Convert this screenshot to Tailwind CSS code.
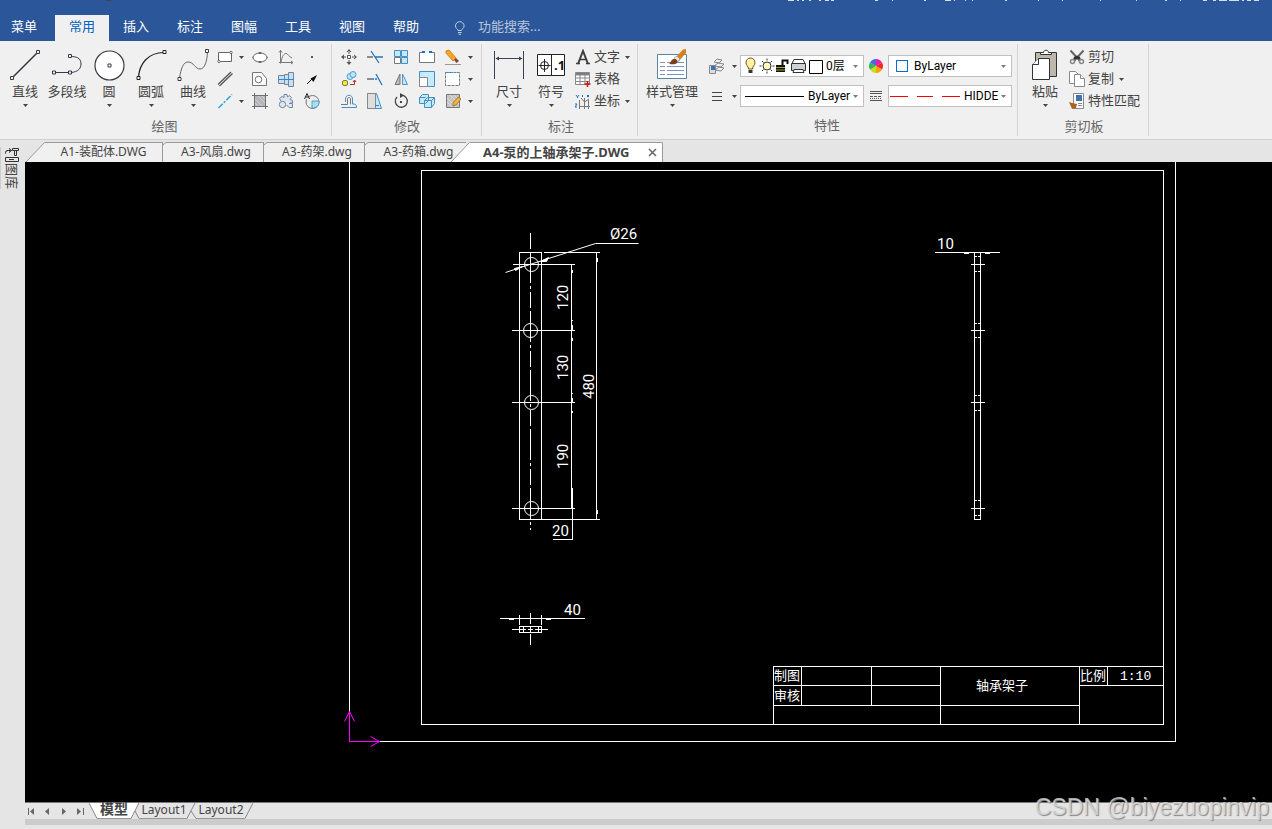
<!DOCTYPE html>
<html lang="zh-CN">
<head>
    <meta charset="UTF-8">
    <meta name="viewport" content="width=device-width, initial-scale=1.0">
    <title>A4-泵的上轴承架子.DWG</title>
    <script src="https://cdn.jsdelivr.net/npm/@tailwindcss/browser@4"></script>
</head>
<body class="min-h-screen flex flex-col bg-[#e5e5e5] text-[13px] text-[#444] font-['Noto_Sans','Noto_Sans_CJK_SC',sans-serif] overflow-hidden">
    <svg class="hidden">
        <symbol id="caret" viewBox="0 0 5 3"><path d="M0 0h5L2.5 3z" fill="#444"/></symbol>
    </svg>

    <!-- Title strip and menu -->
    <header class="bg-[#2b579a] h-[41px] flex flex-col">
        <svg class="w-full h-[2px] shrink-0" stroke="#d5deeb" stroke-width="2" shape-rendering="crispEdges">
            <path d="M788 0h6M797 0h2M802 0h2M809 0h2M819 0h2M825 0h4M831 0h3M875 0h3M892 0h1M924 0h2M945 0h6M954 0h1M965 0h1M972 0h1M1005 0h2M1038 0h1M1062 0h1M1100 0h1M1136 0h1M1165 0h2M1180 0h1M1203 0h4M1213 0h3M1219 0h8M1229 0h10M1242 0h2M1247 0h4M1254 0h5"/>
            <path d="M106 0h5" stroke="#444"/>
        </svg>
        <nav class="flex flex-1 items-end text-white leading-[22px]">
            <a href="#" class="w-12 h-[26px] text-center">菜单</a>
            <a href="#" class="ml-[7px] w-[54px] h-[26px] text-center bg-[#f0f0f0] text-[#0563c1]">常用</a>
            <a href="#" class="w-[54px] h-[26px] text-center">插入</a>
            <a href="#" class="w-[54px] h-[26px] text-center">标注</a>
            <a href="#" class="w-[54px] h-[26px] text-center">图幅</a>
            <a href="#" class="w-[54px] h-[26px] text-center">工具</a>
            <a href="#" class="w-[54px] h-[26px] text-center">视图</a>
            <a href="#" class="w-[54px] h-[26px] text-center">帮助</a>
            <label for="search" class="ml-[21px] w-6 h-[26px] pt-[6px]" aria-label="功能搜索">
                <svg class="w-3 h-[14px]" viewBox="0 0 12 14" fill="none" stroke="#c3cede"><path d="M4 9.5C4 8 1.5 7.500 1.500 5a4.300 4.300 0 0 1 8.600 0C10.100 7.500 7.500 8 7.500 9.500zM4 11.500h3.500M4.500 13.300h2.500"/></svg>
            </label>
            <input id="search" type="text" placeholder="功能搜索..." class="w-40 h-[26px] pb-1 bg-transparent outline-none placeholder:text-[#b9c5d8]">
        </nav>
    </header>

    <!-- Ribbon -->
    <div class="h-[99px] bg-[#f0f0f0] border-b border-[#d0d0d0] pt-[3px] pl-px flex">
        <!-- 绘图 -->
        <section class="pt-[2px] pl-[3px] pr-[6px] flex flex-col">
            <div class="flex h-[66px]">
                <button class="w-[42px] pt-[3px] flex flex-col items-center leading-5 whitespace-nowrap">
                    <svg class="size-8 shrink-0" viewBox="0 0 32 32" fill="#f0f0f0" stroke="#3a3a46"><path d="M3 29 29 3" stroke-width="1.600"/><path d="M1.500 27.500h3v3h-3zM27.500 1.500h3v3h-3z"/></svg>
                    直线<svg class="w-[5px] h-[3px] mt-[3px] shrink-0"><use href="#caret"/></svg>
                </button>
                <button class="w-[42px] pt-[3px] flex flex-col items-center leading-5 whitespace-nowrap">
                    <svg class="size-8 shrink-0" viewBox="0 0 32 32" fill="none" stroke="#3a3a46"><path d="M3 23.500h16c5 0 11-2 11-8.500S25 7.500 19 7.500"/><path d="M1.500 22h3v3h-3zM17.500 22h3v3h-3zM17.500 5.500h3v3h-3z" fill="#f0f0f0"/></svg>
                    多段线
                </button>
                <button class="w-[42px] pt-[3px] flex flex-col items-center leading-5 whitespace-nowrap">
                    <svg class="size-8 shrink-0" viewBox="0 0 32 32" fill="#fff" stroke="#3a3a46"><circle cx="16.500" cy="16.500" r="14.500" stroke-width="1.200"/><path d="M15 15h3v3h-3z"/></svg>
                    圆<svg class="w-[5px] h-[3px] mt-[3px] shrink-0"><use href="#caret"/></svg>
                </button>
                <button class="w-[42px] pt-[3px] flex flex-col items-center leading-5 whitespace-nowrap">
                    <svg class="size-8 shrink-0" viewBox="0 0 32 32" fill="none" stroke="#222"><path d="M3.500 29C4 15 13 3.500 29 3.500" stroke-width="1.200"/><path d="M2 27.500h3v3H2zM28 1.500h3v3h-3z" fill="#fff"/></svg>
                    圆弧<svg class="w-[5px] h-[3px] mt-[3px] shrink-0"><use href="#caret"/></svg>
                </button>
                <button class="w-[42px] pt-[3px] flex flex-col items-center leading-5 whitespace-nowrap">
                    <svg class="size-8 shrink-0" viewBox="0 0 32 32" fill="none" stroke="#3a3a46"><path d="M2.500 29C4 20 6 13 11 13c6 0 7 7 12 7 5 0 7-8 7.500-17" stroke="#666"/><path d="M1 28.500h3v3H1zM28.500.500h3v3h-3z" fill="#fff"/></svg>
                    曲线<svg class="w-[5px] h-[3px] mt-[3px] shrink-0"><use href="#caret"/></svg>
                </button>
                <div class="grid grid-cols-[22px_11px_26px_26px_26px] grid-rows-[22px_22px_22px] place-items-center">
                    <button aria-label="矩形"><svg class="size-4" viewBox="0 0 16 16" fill="#fff" stroke="#666"><path d="M1.500 3.500h13v9h-13z"/><circle cx="14" cy="3.500" r="1.200"/><circle cx="2" cy="12.500" r="1.200"/></svg></button>
                    <button aria-label="矩形选项"><svg class="w-[5px] h-[3px]"><use href="#caret"/></svg></button>
                    <button aria-label="椭圆"><svg class="size-4" viewBox="0 0 16 16" fill="#fff" stroke="#666"><ellipse cx="8" cy="8.500" rx="7" ry="4.500"/><path d="M7 3.500h2v1H7zM7 12.500h2v1H7zM1 8v1M15 8v1" fill="#444"/></svg></button>
                    <button aria-label="公式曲线"><svg class="size-4" viewBox="0 0 16 16" fill="none" stroke="#777"><path d="M2.500 1v13.500M1 13.500h14M1 3.500l1.500-2L4 3.500M13 12l2 1.500-2 1.500M3 13C4 7 6 4.500 8 4.500S11 8 14 9"/></svg></button>
                    <button aria-label="点"><svg class="size-4" viewBox="0 0 16 16"><path d="M7 7h2v2H7z" fill="#555"/></svg></button>

                    <button aria-label="平行线"><svg class="size-4" viewBox="0 0 16 16" stroke="#555" stroke-width="1.300"><path d="M1 13.500 14 1M2.500 15 15.500 2.500"/></svg></button>
                    <span></span>
                    <button aria-label="局部放大"><svg class="size-4" viewBox="0 0 16 16" fill="#fafafa" stroke="#777"><path d="M.500 1.500h9l5 6v7H.500z"/><circle cx="6.500" cy="8.500" r="3.300"/></svg></button>
                    <button aria-label="轴"><svg class="size-4" viewBox="0 0 16 16" fill="#c8dff3" stroke="#72879b"><path d="M.500 4.500h6v8h-6zM6.500 3.500h4v10h-4zM10.500 1.500h5v14h-5z"/><path d="M0 8.500h16" stroke="#2b8ad4"/></svg></button>
                    <button aria-label="箭头"><svg class="size-4" viewBox="0 0 16 16"><path d="m3 13 5-5" stroke="#111"/><path d="M13 4 6.500 7.500 9.500 11z" fill="#111"/></svg></button>

                    <button aria-label="中心线"><svg class="size-4" viewBox="0 0 16 16" stroke="#2ba3de" stroke-width="1.500"><path d="M1.500 15 15 1.500" stroke-dasharray="6 1.500 2 1.500"/></svg></button>
                    <button aria-label="中心线选项"><svg class="w-[5px] h-[3px]"><use href="#caret"/></svg></button>
                    <button aria-label="剖面线"><svg class="size-4" viewBox="0 0 16 16" fill="#b3b7bb" stroke="#6f6f6f"><path d="M2.500 2.500h11v11h-11z"/><path d="M2.500 0v16M13.500 0v16M0 2.500h16M0 13.500h16"/><path d="m3 6 7 7M3 10l3 3M6 3l7 7M10 3l3 3" stroke="#cfcfcf"/></svg></button>
                    <button aria-label="齿轮"><svg class="size-4" viewBox="0 0 16 16" fill="#dce5f1" stroke="#76869a"><path d="M3 8 1.500 5.500 4 3.500 6 4.500V1.500h3l.500 2.500 2-1.500 2 2-1.500 2 2.500 1v2.500H12M11 10.500h3.500v4H11L8.500 12"/><circle cx="4.500" cy="11.500" r="3.200"/></svg></button>
                    <button aria-label="文字查看"><svg class="size-4" viewBox="0 0 16 16"><circle cx="8.500" cy="9" r="6.500" fill="#eee" stroke="#777"/><path d="M8 8h7c.500 5-3 7-7 7z" fill="#a8dff5" stroke="#4f9ec2"/><path d="m.500 6 2.500-5.500L5.500 6M1.500 4h3" fill="#f0f0f0" stroke="#222"/></svg></button>
                </div>
            </div>
            <h2 class="text-center text-[#666] leading-[28px]">绘图</h2>
        </section>
        <div class="w-px h-[92px] bg-[#d4d4d4]"></div>

        <!-- 修改 -->
        <section class="pt-[2px] pl-1 pr-[7px] flex flex-col">
            <div class="grid grid-cols-[26px_26px_26px_26px_26px_8px] grid-rows-[22px_22px_22px] place-items-center">
                <button aria-label="平移"><svg class="size-4" viewBox="0 0 16 16" fill="#555"><path d="M6.500 6.500h3v3h-3z" fill="#fff" stroke="#555"/><path d="M8 0 5.500 3h5zM8 16l-2.500-3h5zM0 8l3-2.500v5zM16 8l-3-2.500v5zM7.500 2h1v3h-1zM7.500 11h1v3h-1zM2 7.500h3v1H2zM11 7.500h3v1h-3z"/></svg></button>
                <button aria-label="裁剪"><svg class="size-4" viewBox="0 0 16 16" stroke="#2474bf" stroke-width="1.300"><path d="M0 8h6" stroke="#555"/><path d="m4 2 8 12M8 8h8" /></svg></button>
                <button aria-label="阵列"><svg class="size-4" viewBox="0 0 16 16" fill="#c5e8fb" stroke="#4490c4"><path d="M1.500 1.500h6v6h-6zM8.500 1.500h6v6h-6zM8.500 8.500h6v6h-6z"/><path d="M1.500 8.500h6v6h-6z" fill="#fff" stroke="#777"/></svg></button>
                <button aria-label="打断"><svg class="size-4" viewBox="0 0 16 16" fill="#fff" stroke="#777"><path d="M5 3.500H.500v10h15v-10H11"/><path d="M3 3h3M10 3h3" stroke="#1670c5" stroke-width="2"/></svg></button>
                <button aria-label="删除"><svg class="size-4" viewBox="0 0 16 16"><path d="M1 2 4 1l7 8-3 3-7-8z" fill="#f2a62c" stroke="#d18a16"/><path d="m9 11 2-2 3 3-2.500 2z" fill="#8d4037"/><path d="M0 15.500h16" stroke="#999"/></svg></button>
                <button aria-label="删除选项"><svg class="w-[5px] h-[3px]"><use href="#caret"/></svg></button>

                <button aria-label="平移复制"><svg class="size-4" viewBox="0 0 16 16"><rect x="1.500" y="9.500" width="5" height="5" rx="1.500" fill="#ffef00" stroke="#777"/><circle cx="9" cy="5.500" r="3" fill="#bde5fa" stroke="#4c9ed1"/><circle cx="12" cy="3.500" r="3" fill="#bde5fa" stroke="#4c9ed1"/><path d="M9 13.500h4.500V9.500M12 11l1.500-2 1.500 2" fill="none" stroke="#a33"/></svg></button>
                <button aria-label="延伸"><svg class="size-4" viewBox="0 0 16 16" stroke="#2474bf" stroke-width="1.300"><path d="M0 8h5" stroke="#555"/><path d="M5 8h6" stroke-dasharray="2 1"/><path d="m9 3 6 11"/></svg></button>
                <button aria-label="镜像"><svg class="size-4" viewBox="0 0 16 16"><path d="M7 3v10.500H2z" fill="#bbb" stroke="#777"/><path d="M9.500 3v10.500h5z" fill="#bfe8fc" stroke="#5197c5"/></svg></button>
                <button aria-label="缩放"><svg class="size-4" viewBox="0 0 16 16"><path d="M.500.500h15v15H.500z" fill="#c5ebfc" stroke="#4490c4"/><path d="M.500 6.500h8v9h-8z" fill="#fff" stroke="#888"/></svg></button>
                <button aria-label="拉伸"><svg class="size-4" viewBox="0 0 16 16"><path d="M.500 1.500h14v13H.500z" fill="#fff" stroke="#777" stroke-dasharray="3 1"/><path d="M0 1.500h15" stroke="#4490c4" stroke-dasharray="2 1"/></svg></button>
                <button aria-label="拉伸选项"><svg class="w-[5px] h-[3px]"><use href="#caret"/></svg></button>

                <button aria-label="等距线"><svg class="size-4" viewBox="0 0 16 16" fill="none"><path d="M.500 14.500h15c0-3-1-3.500-4-3.500V6c0-5-7-5-7 0v3" stroke="#4490c4"/><path d="M0 11.500h6.500V6c0-2 3-2 3 0v5.500" stroke="#777"/></svg></button>
                <button aria-label="过渡"><svg class="size-4" viewBox="0 0 16 16"><path d="M.500.500h9l5 15H.500z" fill="#c3eafc" stroke="#4490c4"/><path d="M.500.500h8v15h-8z" fill="#dedede" stroke="#888"/><path d="M8 12.500h4" stroke="#3182c4"/></svg></button>
                <button aria-label="旋转"><svg class="size-4" viewBox="0 0 16 16" fill="none" stroke="#444"><path d="M4 4a6 6 0 1 0 4-1.800" stroke-width="1.300"/><path d="m7 0 4 2.500L7 5z" fill="#444" stroke="none"/><path d="M7 8h2v2H7z" fill="#444" stroke="none"/></svg></button>
                <button aria-label="分解"><svg class="size-4" viewBox="0 0 16 16" fill="#c5e8fb" stroke="#4490c4"><path d="m.500 4.500 3-3h6v6l-3 3h-6zM5.500 7.500l3-3h7v6l-3 4h-7zM5.500 7.500h7v7M12.500 7.500l3-3M.500 4.500h6"/></svg></button>
                <button aria-label="编辑"><svg class="size-4" viewBox="0 0 16 16"><path d="M1.500 1.500h13v13h-13z" fill="#c5c5c5" stroke="#777"/><path d="m2 5 9 9M2 9l5 5M5 2l9 9M9 2l5 5" stroke="#dedede"/><path d="m8 10 5-6 3 2-5 6-3 1z" fill="#eeb247" stroke="#b27927"/></svg></button>
                <button aria-label="编辑选项"><svg class="w-[5px] h-[3px]"><use href="#caret"/></svg></button>
            </div>
            <h2 class="-mr-1 text-center text-[#666] leading-[28px]">修改</h2>
        </section>
        <div class="w-px h-[92px] bg-[#d4d4d4]"></div>

        <!-- 标注 -->
        <section class="pt-[2px] pl-[6px] pr-[7px] flex flex-col">
            <div class="flex h-[66px]">
                <button class="w-[42px] pt-[3px] flex flex-col items-center leading-5">
                    <svg class="size-8 shrink-0" viewBox="0 0 32 32" stroke="#3b4252" fill="#3b4252"><path d="M1.500 2v28M30.500 2v28M3 9.500h26"/><path d="M2.500 9.500 6 7.500v4zM29.500 9.500 26 7.500v4z" stroke="none"/></svg>
                    尺寸<svg class="w-[5px] h-[3px] mt-[3px] shrink-0"><use href="#caret"/></svg>
                </button>
                <button class="w-[42px] pt-[3px] flex flex-col items-center leading-5">
                    <svg class="size-8 shrink-0" viewBox="0 0 32 32" stroke="#222" fill="#fff"><path d="M2.500 5.500h27v21h-27zM16.500 5.500v21"/><circle cx="9.500" cy="16.500" r="4"/><path d="M9.500 10v13M3.500 16.500h12"/><text x="19" y="21" font-size="13" font-weight="bold" fill="#111" stroke="none">.1</text></svg>
                    符号<svg class="w-[5px] h-[3px] mt-[3px] shrink-0"><use href="#caret"/></svg>
                </button>
                <div class="flex flex-col leading-5">
                    <button class="flex items-start h-[22px]">
                        <span class="w-[22px] h-[22px] flex justify-center items-center"><svg class="size-4" viewBox="0 0 16 16" fill="none" stroke="#3f3f3f"><path d="M3 15 8 2l5 13" stroke-width="2"/><path d="M4.500 10.500h7M1 14.500h4M11 14.500h4" stroke-width="1.300"/></svg></span>
                        文字<svg class="w-[5px] h-[3px] ml-[5px] self-center"><use href="#caret"/></svg>
                    </button>
                    <button class="flex items-start h-[22px]">
                        <span class="w-[22px] h-[22px] flex justify-center items-center"><svg class="size-4" viewBox="0 0 16 16" fill="#fff" stroke="#888"><path d="M.500 1.500h14v12H.500zM.500 7h14M.500 10.500h14M5 4v9M10 4v9"/><path d="M1 1.500h13V4H1z" fill="#777b87"/><path d="M12.500 10v6M9.500 13h6" stroke="#c11" stroke-width="1.500"/></svg></span>
                        表格
                    </button>
                    <button class="flex items-start h-[22px]">
                        <span class="w-[22px] h-[22px] flex justify-center items-center"><svg class="size-4" viewBox="0 0 16 16" fill="none" stroke="#777"><path d="M4.500 7v9M4 13.500h11M9.500 5v11M13.500 7v9M6 5l3.500 4L14 6"/><path d="m1 2 1.500 2L4 2M2.500 4v1M7.500 2v2M12 2l2 2M14 2l-2 2M0 11h2l-2 3h2" stroke="#1d72c0"/></svg></span>
                        坐标<svg class="w-[5px] h-[3px] ml-[5px] self-center"><use href="#caret"/></svg>
                    </button>
                </div>
            </div>
            <h2 class="-mr-1 text-center text-[#666] leading-[28px]">标注</h2>
        </section>
        <div class="w-px h-[92px] bg-[#d4d4d4]"></div>

        <!-- 特性 -->
        <section class="pt-[2px] pl-1 pr-[5px] flex flex-col">
            <div class="flex h-[66px] gap-[3px]">
                <button class="w-[60px] pt-[3px] flex flex-col items-center leading-5 whitespace-nowrap">
                    <svg class="size-8 shrink-0" viewBox="0 0 32 32"><path d="M1.500 5.500h29v24h-29z" fill="#fff" stroke="#5b84a0"/><path d="M4 13.500h5M4 17.500h5M4 21.500h5M4 25.500h5M11 13.500h17M11 17.500h17M11 21.500h17M11 25.500h17" stroke="#7d96b5"/><path d="m20 8 7-7.500 3-.500v4l-7 8z" fill="#d9801e"/><path d="m18 9 3-2 3 3-2 3z" fill="#e8e8e8" stroke="#777" stroke-width=".500"/><path d="M13 15c2-1 2-5 5-5 3 0 4 2 3 4-2 2-5 1-8 1z" fill="#7a3f17"/></svg>
                    样式管理<svg class="w-[5px] h-[3px] mt-[3px] shrink-0"><use href="#caret"/></svg>
                </button>
                <div class="grid grid-cols-[24px_11px_124px_24px_124px] grid-rows-[22px_22px] gap-y-2 pt-[9px] place-items-center text-[12px] text-black font-['Roboto','Noto_Sans_CJK_SC',sans-serif]">
                    <button aria-label="图层"><svg class="size-4" viewBox="0 0 16 16" fill="#eee" stroke="#888"><path d="m5 4 3-3 5 1-3 3zM5 8l4-3 6 1-3 3zM6 12l4-3 5 1-3 3z"/><path d="M.500 7.500h6v8h-6z" fill="#ddd"/><path d="M2 8h4v4H2z" fill="#3477b5" stroke="none"/></svg></button>
                    <button aria-label="图层选项"><svg class="w-[5px] h-[3px]"><use href="#caret"/></svg></button>
                    <div class="w-full h-[22px] border border-[#c0c0c0] bg-white flex items-center pl-1 pr-[5px]">
                        <svg class="w-[80px] h-[18px] mr-px shrink-0" viewBox="0 0 80 18">
                            <path d="M3.500 12C3.500 9 1 8.500 1 5.500a4.500 4.500 0 0 1 9 0C10 8.500 7.500 9 7.500 12z" fill="#fff2a0" stroke="#6b541e"/><path d="M3.500 13h4v3h-4z" fill="#333"/>
                            <circle cx="22" cy="9" r="4" fill="#fff6c0" stroke="#333"/><path d="M22 1.500v2M22 14.500v2M14.500 9h2M27.500 9h2M17 4l1.500 1.500M27 4l-1.500 1.500M17 14l1.500-1.500M27 14l-1.500-1.500" stroke="#333"/>
                            <path d="M31 8h9v7h-9z" fill="#111"/><path d="M31 10.500h9M31 13h9" stroke="#9ca12a"/><path d="M37.500 8V3.500h5V7" fill="none" stroke="#111" stroke-width="2"/>
                            <path d="M49 2.500h9l2 4H47z" fill="#fff" stroke="#333"/><path d="M46.500 6.500h14v7h-14z" fill="#ccd2d6" stroke="#333"/><path d="M49 12.500h9l1 3H48z" fill="#fff" stroke="#333"/>
                            <path d="M64.500 3.500h13v13h-13z" fill="#fff" stroke="#000"/>
                        </svg>
                        <select aria-label="当前图层" class="appearance-none flex-1 min-w-0 outline-none"><option>0层</option></select>
                        <svg class="w-[5px] h-[3px] shrink-0 opacity-70"><use href="#caret"/></svg>
                    </div>
                    <button aria-label="颜色"><svg class="size-4" viewBox="-8 -8 16 16"><path d="M0 0V-7A7 7 0 0 1 6-3.500z" fill="#e421a6"/><path d="M0 0 6-3.500A7 7 0 0 1 6 3.500z" fill="#f5281e"/><path d="M0 0 6 3.500A7 7 0 0 1 0 7z" fill="#f5a30c"/><path d="M0 0V7A7 7 0 0 1-6 3.500z" fill="#c9de17"/><path d="M0 0-6 3.500A7 7 0 0 1-6-3.500z" fill="#35b84b"/><path d="M0 0-6-3.500A7 7 0 0 1 0-7z" fill="#4866e6"/></svg></button>
                    <div class="w-full h-[22px] border border-[#c0c0c0] bg-white flex items-center pl-[7px] pr-[5px]">
                        <span class="size-3 border border-[#0a6cc9] mr-[6px]"></span>
                        <select aria-label="颜色" class="appearance-none flex-1 min-w-0 outline-none"><option>ByLayer</option></select>
                        <svg class="w-[5px] h-[3px] shrink-0 opacity-70"><use href="#caret"/></svg>
                    </div>

                    <button aria-label="线宽"><svg class="size-4" viewBox="0 0 16 16" stroke="#444"><path d="M3 4.500h10M3 8.500h10M3 12.500h10"/></svg></button>
                    <button aria-label="线宽选项"><svg class="w-[5px] h-[3px]"><use href="#caret"/></svg></button>
                    <div class="w-full h-[22px] border border-[#c0c0c0] bg-white flex items-center pl-1 pr-[5px]">
                        <span class="w-[59px] border-t border-black mr-1"></span>
                        <select aria-label="线宽" class="appearance-none flex-1 min-w-0 outline-none"><option>ByLayer</option></select>
                        <svg class="w-[5px] h-[3px] shrink-0 opacity-70"><use href="#caret"/></svg>
                    </div>
                    <button aria-label="线型"><svg class="size-4" viewBox="0 0 16 16" stroke="#555"><path d="M2 3.500h12M2 5.500h12M2 12.500h12"/><path d="M2 8.500h12" stroke-dasharray="3 1"/><path d="M2 10.500h12" stroke-dasharray="1 1"/></svg></button>
                    <div class="w-full h-[22px] border border-[#c0c0c0] bg-white flex items-center pl-px pr-[5px]">
                        <svg class="w-[70px] h-px mr-1 shrink-0"><path d="M0 .500h18M27 .500h16M52 .500h18" stroke="#f00"/></svg>
                        <select aria-label="线型" class="appearance-none w-[37px] outline-none overflow-hidden"><option>HIDDE</option></select>
                        <svg class="w-[5px] h-[3px] ml-auto shrink-0 opacity-70"><use href="#caret"/></svg>
                    </div>
                </div>
            </div>
            <h2 class="text-center text-[#666] leading-[28px]">特性</h2>
        </section>
        <div class="w-px h-[92px] bg-[#d4d4d4]"></div>

        <!-- 剪切板 -->
        <section class="pt-[2px] pl-[6px] pr-2 flex flex-col">
            <div class="flex h-[66px]">
                <button class="w-[42px] pt-[3px] flex flex-col items-center leading-5">
                    <svg class="size-8 shrink-0" viewBox="0 0 32 32" stroke="#333"><path d="M6.500 3.500h21v24h-21z" fill="#bdb7ae"/><path d="M11.500 3.500h3c0-3 5-3 5 0h3v2h-11z" fill="#fff"/><path d="M9.500 9.500h11v21h-17v-15z" fill="#fff"/><path d="M9.500 9.500v6h-6" fill="#fff"/></svg>
                    粘贴<svg class="w-[5px] h-[3px] mt-[3px] shrink-0"><use href="#caret"/></svg>
                </button>
                <div class="flex flex-col leading-5">
                    <button class="flex items-start h-[22px]">
                        <span class="w-[22px] h-[22px] flex justify-center items-center"><svg class="size-4" viewBox="0 0 16 16" fill="none"><path d="m1.500 1.500 9 10M14.500 1.500l-9 10" stroke="#666" stroke-width="2"/><path d="m5 8 3-1.500L11 8l1 3-3-1H7l-3 1z" fill="#333"/><circle cx="3.500" cy="12.500" r="2" stroke="#888" stroke-width="1.500"/><circle cx="12.500" cy="12.500" r="2" stroke="#888" stroke-width="1.500"/></svg></span>
                        剪切
                    </button>
                    <button class="flex items-start h-[22px]">
                        <span class="w-[22px] h-[22px] flex justify-center items-center"><svg class="size-4" viewBox="0 0 16 16" fill="#fff" stroke="#888"><path d="M.500.500h6l3 3v9h-9z"/><path d="M5.500 3.500h6l4 4v8h-10z"/><path d="M11.500 3.500v4h4"/></svg></span>
                        复制<svg class="w-[5px] h-[3px] ml-[5px] self-center"><use href="#caret"/></svg>
                    </button>
                    <button class="flex items-start h-[22px]">
                        <span class="w-[22px] h-[22px] flex justify-center items-center"><svg class="size-4" viewBox="0 0 16 16"><path d="M4.500.500h10v15h-10z" fill="#fff" stroke="#888"/><path d="M7 2h6v6H7z" fill="#3d74ab"/><path d="M9 10.500h4M9 12.500h4" stroke="#888"/><path d="m0 9 3 1 5 1-1 4-4 1z" fill="#ad631d"/></svg></span>
                        特性匹配
                    </button>
                </div>
            </div>
            <h2 class="-mr-1 text-center text-[#666] leading-[28px]">剪切板</h2>
        </section>
        <div class="w-px h-[92px] bg-[#d4d4d4]"></div>
    </div>

    <div class="flex flex-1">
        <!-- Library side tab -->
        <aside class="w-[25px] pt-[7px]">
            <button class="w-[22px] h-[42px] border-l border-[#ccc] flex flex-col items-center">
                <svg class="w-4 h-4 shrink-0" viewBox="0 0 16 16" fill="none" stroke="#333"><path d="M1.500 6.500V5.500c0-2 2-2 5-2M5 1.500l2.500 2L5 5.500" stroke="#111"/><path d="M8.500 1.500h6v2h-6zM10.500 3.500v5h2v-5M1.500 10.500h13v4h-13zM5 12.500h5"/></svg>
                <span class="[writing-mode:vertical-rl] [text-orientation:sideways] leading-[16px] text-[13px]">图库</span>
            </button>
        </aside>

        <div class="flex-1 min-w-0 flex flex-col">
            <!-- Document tabs -->
            <nav class="flex h-[22px] pt-[2px] leading-[17px] text-[12px] whitespace-nowrap">
                <a href="#" class="flex">
                    <svg class="w-5 h-5" viewBox="0 0 20 20"><path d="M1 20 19.500.500H20V20z" fill="#f0f0f0"/><path d="M1 20 19.500.500h.500" fill="none" stroke="#999"/></svg>
                    <span class="w-[118px] text-center border-t border-r border-[#999] bg-[#f0f0f0]">A1-装配体.DWG</span>
                </a>
                <a href="#" class="flex">
                    <svg class="w-[3px] h-5" viewBox="0 0 3 20"><path d="M0 3 3 .500V20H0z" fill="#f0f0f0"/><path d="M0 3 3 .500" stroke="#999"/></svg>
                    <span class="w-[98px] pl-[3px] text-center border-t border-r border-[#999] bg-[#f0f0f0]">A3-风扇.dwg</span>
                </a>
                <a href="#" class="flex">
                    <svg class="w-[3px] h-5" viewBox="0 0 3 20"><path d="M0 3 3 .500V20H0z" fill="#f0f0f0"/><path d="M0 3 3 .500" stroke="#999"/></svg>
                    <span class="w-[98px] pl-[3px] text-center border-t border-r border-[#999] bg-[#f0f0f0]">A3-药架.dwg</span>
                </a>
                <a href="#" class="flex">
                    <svg class="w-[3px] h-5" viewBox="0 0 3 20"><path d="M0 3 3 .500V20H0z" fill="#f0f0f0"/><path d="M0 3 3 .500" stroke="#999"/></svg>
                    <span class="w-[98px] pl-[3px] text-center border-t border-[#999] bg-[#f0f0f0]">A3-药箱.dwg</span>
                </a>
                <a href="#" class="flex font-bold text-[13px] relative -ml-4">
                    <svg class="w-5 h-5" viewBox="0 0 20 20"><path d="M1 20 19.500.500H20V20z" fill="#fff"/><path d="M1 20 19.500.500h.500" fill="none" stroke="#999"/></svg>
                    <span class="w-[193px] pl-[13px] pb-px border-t border-r border-[#999] bg-white rounded-tr-xs flex items-center">A4-泵的上轴承架子.DWG
                        <svg class="size-[9px] ml-auto mr-[5px]" viewBox="0 0 9 9" stroke="#666" stroke-width="1.500"><path d="m1 1 7 7M8 1 1 8"/></svg>
                    </span>
                </a>
            </nav>

            <!-- Drawing area -->
            <main class="flex-1 min-h-[640px] bg-black flex">
                <svg class="flex-1 min-w-0" fill="none" stroke="#fff">
                    <g transform="translate(-24.500 -161.500)" shape-rendering="crispEdges">
                        <!-- sheet and frame -->
                        <path d="M349 161V741H1175V161M421 170h742v554H421z"/>
                        <!-- title block -->
                        <path d="M773 724V666h390M773 685h167M1079 685h84M773 705h306M801 666v39M871 666v39M940 666v58M1079 666v58M1107 666v19"/>

                        <!-- front view -->
                        <path d="M519 252h22v267h-22z"/>
                        <path d="M530 232V529" stroke-dasharray="16 3 31 3 3 3"/>
                        <path d="M512 264h62M511 330h63M511 402h63M511 508h63M543 252h56M541 519h58"/>
                        <path d="M571 264v244M572 487v52h-20M596 252v267"/>
                        <path d="M572 269v3M572 337v3M572 410v2M572 324v5M572 397v5M597 257v4M597 509v4M572 519v4M570 320h2M570 393h2M570 498h2"/>
                        <g shape-rendering="auto">
                            <circle cx="531" cy="264" r="7"/>
                            <circle cx="530" cy="330" r="7"/>
                            <circle cx="531" cy="402" r="7"/>
                            <circle cx="531" cy="508" r="7"/>
                            <path d="m505 272 15-5M520 267l75-24h43"/>
                            <path d="m514 268 8-2-7 4zM540 261l8-4-2 4z" fill="#fff"/>
                        </g>

                        <!-- side view -->
                        <path d="M974 252v267h6V252M934 252h65M963 253h5M984 253h5"/>
                        <path d="M970 264h14M970 330h14M970 402h14M970 508h14"/>
                        <path d="M974 256h6M974 271h6M974 323h6M974 337h6M974 395h6M974 410h6M974 500h6M974 515h6" stroke-dasharray="2 1"/>

                        <!-- top view -->
                        <path d="M499 618h85M508 619h5M545 619h5M519 614v10M541 614v10M530 612v11M530 626v5M530 633v11M519 626h22v6h-22zM523 626v6M538 626v6"/>
                        <path d="M511 629h14M527 629h5M534 629h13"/>

                        <!-- UCS origin -->
                        <g stroke="#f0f">
                            <path d="M349 711v30"/>
                            <path d="M349 741h30"/>
                            <path d="m344 721 5-10 5 10M370 736l9 5-9 5" shape-rendering="auto"/>
                        </g>
                    </g>
                    <g transform="translate(-25 -162)" fill="#fff" stroke="none" class="font-['Roboto','Noto_Sans_CJK_SC',sans-serif] text-[15px]">
                        <text x="610" y="239">Ø26</text>
                        <text x="937" y="249">10</text>
                        <text x="564" y="615">40</text>
                        <text x="552" y="536">20</text>
                        <text transform="translate(568 310) rotate(-90)">120</text>
                        <text transform="translate(568 380) rotate(-90)">130</text>
                        <text transform="translate(568 469) rotate(-90)">190</text>
                        <text transform="translate(594 399) rotate(-90)">480</text>
                        <g class="text-[13px]">
                            <text x="774" y="680">制图</text>
                            <text x="774" y="700">审核</text>
                            <text x="976" y="690">轴承架子</text>
                            <text x="1080" y="680">比例</text>
                            <text x="1120" y="680" class="font-['Liberation_Mono',monospace]">1:10</text>
                        </g>
                    </g>
                </svg>
            </main>

            <!-- Layout tabs -->
            <footer class="border-t border-[#777] pb-1">
                <div class="flex h-4 leading-[14px] text-[12px] whitespace-nowrap">
                    <div class="flex items-center gap-[11px] pl-[3px] pr-[5px]">
                        <button aria-label="第一页"><svg class="w-[6px] h-[7px]" viewBox="0 0 6 7" fill="#666"><path d="M0 0h1v7H0zM6 0v7L2 3.500z"/></svg></button>
                        <button aria-label="上一页"><svg class="w-[5px] h-[7px]" viewBox="0 0 5 7" fill="#666"><path d="M4 0v7L0 3.500z"/></svg></button>
                        <button aria-label="下一页"><svg class="w-[5px] h-[7px]" viewBox="0 0 5 7" fill="#666"><path d="M1 0v7l4-3.500z"/></svg></button>
                        <button aria-label="最后一页"><svg class="w-[7px] h-[7px]" viewBox="0 0 7 7" fill="#666"><path d="M0 0v7l4-3.500zM6 0h1v7H6z"/></svg></button>
                    </div>
                    <a href="#" class="flex font-bold text-[14px]">
                        <svg class="w-2 h-4" viewBox="0 0 8 16"><path d="M0 0h8v15.500z" fill="#fff"/><path d="m0 0 8 15.500" stroke="#888"/></svg>
                        <span class="w-[34px] text-center leading-[12px] bg-white border-b border-[#999]">模型</span>
                        <svg class="w-2 h-4" viewBox="0 0 8 16"><path d="M0 0h8L0 15.500z" fill="#fff"/><path d="M0 15.500 8 0M4 8l4 7.500" stroke="#888"/></svg>
                    </a>
                    <a href="#" class="flex">
                        <span class="w-12 pl-[2px] text-center border-b border-[#999]">Layout1</span>
                        <svg class="w-[10px] h-4" viewBox="0 0 10 16"><path d="M0 15.500 8 0M4 8l5 7.500h1" fill="none" stroke="#888"/></svg>
                    </a>
                    <a href="#" class="flex">
                        <span class="w-12 text-center border-b border-[#999]">Layout2</span>
                        <svg class="w-2 h-4" viewBox="0 0 8 16"><path d="M0 15.500 8 0" stroke="#888"/></svg>
                    </a>
                </div>
                <div class="h-[6px] bg-[#ccc]"></div>
            </footer>
        </div>
    </div>

    <p class="absolute right-[3px] bottom-2 text-[23px] leading-[28px] text-[#ddd]/80 font-['Liberation_Sans',sans-serif] [text-shadow:1px_1px_1px_#888] pointer-events-none">CSDN @biyezuopinvip</p>
</body>
</html>
